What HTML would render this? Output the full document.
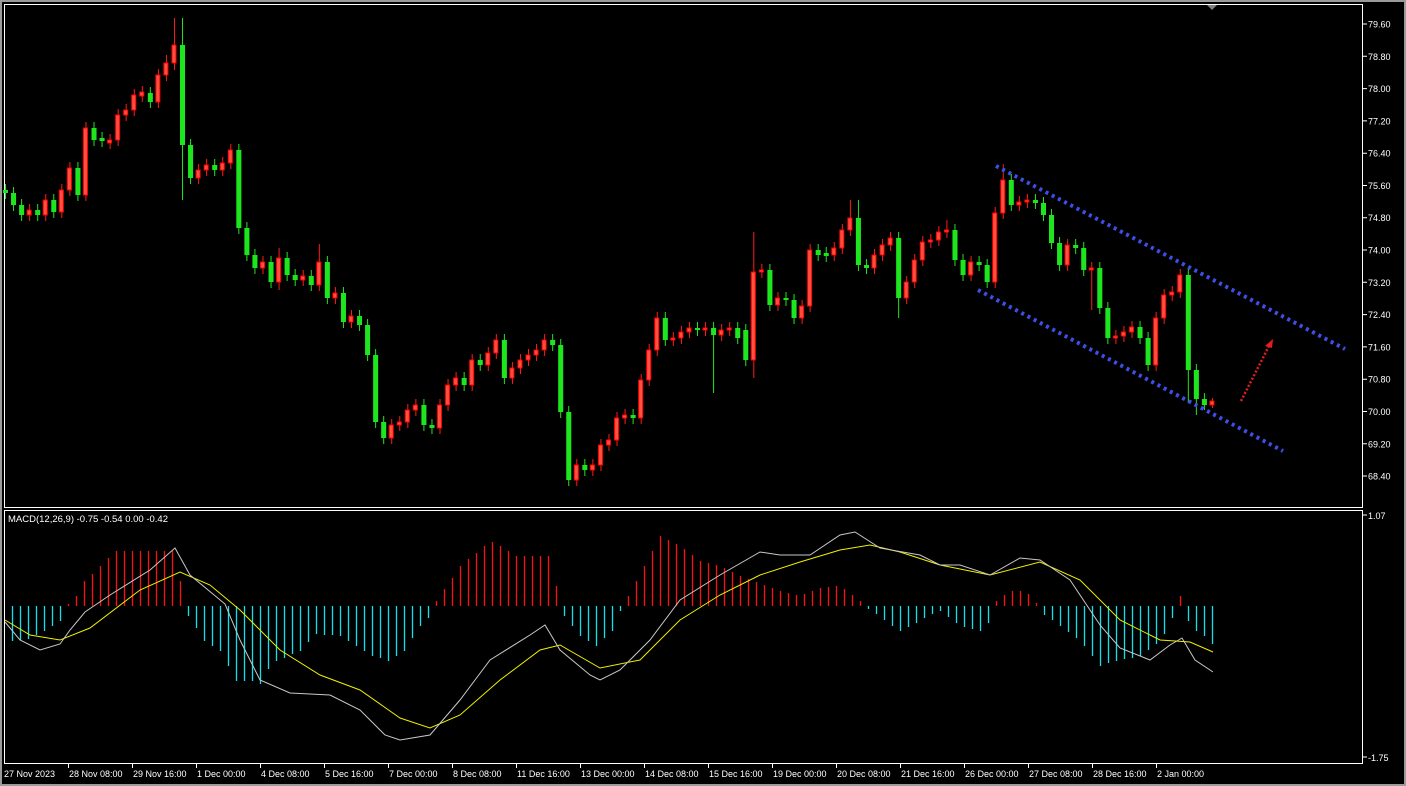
<!DOCTYPE html>
<html><head><meta charset="utf-8"><style>
html,body{margin:0;padding:0;background:#000;width:1406px;height:786px;overflow:hidden}
svg{display:block}
text{font-family:"Liberation Sans",sans-serif;font-size:9px;fill:#fff}
</style></head><body>
<svg width="1406" height="786" xmlns="http://www.w3.org/2000/svg">
<rect x="0" y="0" width="1406" height="786" fill="#000"/>
<rect x="0.5" y="0.5" width="1405" height="785" fill="none" stroke="#9a9a9a" stroke-width="3"/>
<rect x="4.5" y="4.5" width="1358" height="503" fill="none" stroke="#fff"/>
<rect x="4.5" y="510.5" width="1358" height="253" fill="none" stroke="#fff"/>
<polygon points="1207,5 1217,5 1212,10" fill="#808080"/>
<text x="8" y="522" style="font-size:9.5px">MACD(12,26,9) -0.75 -0.54 0.00 -0.42</text>

<g stroke="#fff">
<path d="M1363,24H1367M1363,56.3H1367M1363,88.6H1367M1363,120.9H1367M1363,153.2H1367M1363,185.5H1367M1363,217.7H1367M1363,250H1367M1363,282.3H1367M1363,314.6H1367M1363,346.9H1367M1363,379.2H1367M1363,411.5H1367M1363,443.8H1367M1363,476H1367M1363,515H1367M1363,757H1367"/>
<path d="M68.5,764V768M132.5,764V768M196.5,764V768M260.5,764V768M324.5,764V768M388.5,764V768M452.5,764V768M516.5,764V768M580.5,764V768M644.5,764V768M708.5,764V768M772.5,764V768M836.5,764V768M900.5,764V768M964.5,764V768M1028.5,764V768M1092.5,764V768M1156.5,764V768"/>
</g>
<text x="1368" y="27.5">79.60</text><text x="1368" y="59.8">78.80</text><text x="1368" y="92.1">78.00</text><text x="1368" y="124.4">77.20</text><text x="1368" y="156.7">76.40</text><text x="1368" y="189">75.60</text><text x="1368" y="221.2">74.80</text><text x="1368" y="253.5">74.00</text><text x="1368" y="285.8">73.20</text><text x="1368" y="318.1">72.40</text><text x="1368" y="350.4">71.60</text><text x="1368" y="382.7">70.80</text><text x="1368" y="415">70.00</text><text x="1368" y="447.3">69.20</text><text x="1368" y="479.5">68.40</text>
<text x="1368" y="519">1.07</text><text x="1368" y="761">-1.75</text>
<g style="font-size:9.5px">
<text x="4" y="777">27 Nov 2023</text><text x="69" y="777">28 Nov 08:00</text><text x="133" y="777">29 Nov 16:00</text><text x="197" y="777">1 Dec 00:00</text><text x="261" y="777">4 Dec 08:00</text><text x="325" y="777">5 Dec 16:00</text><text x="389" y="777">7 Dec 00:00</text><text x="453" y="777">8 Dec 08:00</text><text x="517" y="777">11 Dec 16:00</text><text x="581" y="777">13 Dec 00:00</text><text x="645" y="777">14 Dec 08:00</text><text x="709" y="777">15 Dec 16:00</text><text x="773" y="777">19 Dec 00:00</text><text x="837" y="777">20 Dec 08:00</text><text x="901" y="777">21 Dec 16:00</text><text x="965" y="777">26 Dec 00:00</text><text x="1029" y="777">27 Dec 08:00</text><text x="1093" y="777">28 Dec 16:00</text><text x="1157" y="777">2 Jan 00:00</text>
</g>

<g transform="translate(5 0) scale(1.0058 1) translate(-5 0)">
<path fill="none" stroke="#ff1a1a" d="M29.5,204V221M45.5,194V221M61.5,184V218M69.5,162V196M85.5,122V201M109.5,134V149M117.5,109V146M125.5,104V121M133.5,89V116M141.5,86V102M157.5,69V108M165.5,55V81M173.5,18V70M197.5,164V184M205.5,159V176M221.5,157V176M229.5,144V169M261.5,256V274M277.5,248V290M301.5,270V286M317.5,244V291M333.5,287V304M349.5,310V328M389.5,419V444M397.5,416V431M405.5,404V428M413.5,399V416M437.5,399V434M445.5,379V411M453.5,372V391M469.5,354V391M485.5,347V371M493.5,334V359M509.5,362V384M517.5,354V374M525.5,349V366M533.5,344V361M541.5,334V356M573.5,459V486M589.5,459V476M597.5,439V471M605.5,434V451M613.5,412V446M621.5,409V424M637.5,374V424M645.5,344V386M653.5,312V356M669.5,332V346M677.5,326V344M685.5,322V338M701.5,322V336M717.5,324V341M725.5,322V336M749.5,232V378M757.5,264V278M773.5,292V311M797.5,300V324M805.5,244V312M829.5,242V261M837.5,224V254M845.5,200V236M869.5,249V274M877.5,239V261M885.5,232V251M901.5,276V304M909.5,254V288M917.5,236V266M925.5,234V248M933.5,226V246M941.5,220V238M965.5,256V281M989.5,207V288M997.5,164V219M1013.5,196V211M1021.5,194V208M1061.5,239V271M1085.5,262V310M1109.5,330V344M1117.5,326V342M1125.5,321V338M1149.5,312V371M1157.5,289V324M1165.5,286V301M1173.5,269V298M1205.5,398V408"/>
<path fill="#ff5040" stroke="#ff0000" d="M27,210h4v5h-4zM43,200h4v15h-4zM59,190h4v22h-4zM67,168h4v22h-4zM83,128h4v67h-4zM107,140h4v3h-4zM115,115h4v25h-4zM123,110h4v5h-4zM131,95h4v15h-4zM139,92h4v4h-4zM155,75h4v27h-4zM163,63h4v12h-4zM171,45h4v18h-4zM195,170h4v8h-4zM203,165h4v5h-4zM219,163h4v7h-4zM227,150h4v13h-4zM259,262h4v6h-4zM275,258h4v24h-4zM299,276h4v4h-4zM315,262h4v23h-4zM331,293h4v5h-4zM347,316h4v6h-4zM387,425h4v13h-4zM395,422h4v3h-4zM403,410h4v12h-4zM411,405h4v5h-4zM435,405h4v23h-4zM443,385h4v20h-4zM451,378h4v7h-4zM467,360h4v25h-4zM483,353h4v12h-4zM491,340h4v13h-4zM507,368h4v10h-4zM515,360h4v8h-4zM523,355h4v5h-4zM531,350h4v5h-4zM539,340h4v10h-4zM571,465h4v15h-4zM587,465h4v5h-4zM595,445h4v20h-4zM603,440h4v5h-4zM611,418h4v22h-4zM619,415h4v3h-4zM635,380h4v38h-4zM643,350h4v30h-4zM651,318h4v32h-4zM667,338h4v2h-4zM675,332h4v6h-4zM683,328h4v4h-4zM699,328h4v2h-4zM715,330h4v5h-4zM723,328h4v2h-4zM747,272h4v88h-4zM755,270h4v2h-4zM771,298h4v7h-4zM795,306h4v12h-4zM803,250h4v56h-4zM827,248h4v7h-4zM835,230h4v18h-4zM843,218h4v12h-4zM867,255h4v13h-4zM875,245h4v10h-4zM883,238h4v7h-4zM899,282h4v16h-4zM907,260h4v22h-4zM915,242h4v18h-4zM923,240h4v2h-4zM931,232h4v8h-4zM939,230h4v2h-4zM963,262h4v13h-4zM987,213h4v69h-4zM995,180h4v33h-4zM1011,202h4v3h-4zM1019,200h4v2h-4zM1059,245h4v20h-4zM1083,268h4v2h-4zM1107,336h4v2h-4zM1115,332h4v4h-4zM1123,327h4v5h-4zM1147,318h4v47h-4zM1155,295h4v23h-4zM1163,292h4v3h-4zM1171,275h4v17h-4zM1203,401h4v4h-4z"/>
<path fill="none" stroke="#1ee61e" d="M5.5,184V199M13.5,187V211M21.5,199V221M37.5,204V221M53.5,194V218M77.5,162V201M93.5,122V146M101.5,132V147M149.5,87V108M181.5,18V200M189.5,139V184M213.5,159V176M237.5,144V234M245.5,222V261M253.5,249V274M269.5,256V288M285.5,252V281M293.5,269V286M309.5,270V291M325.5,256V304M341.5,287V328M357.5,310V331M365.5,319V361M373.5,349V428M381.5,416V444M421.5,399V431M429.5,419V434M461.5,372V391M477.5,354V371M501.5,334V384M549.5,334V351M557.5,339V418M565.5,406V486M581.5,459V476M629.5,409V424M661.5,312V346M693.5,322V336M709.5,322V393M733.5,322V344M741.5,324V366M765.5,264V311M781.5,292V306M789.5,294V324M813.5,244V261M821.5,247V262M853.5,200V271M861.5,259V274M893.5,232V318M949.5,224V266M957.5,254V281M973.5,256V271M981.5,259V288M1005.5,174V211M1029.5,194V209M1037.5,197V221M1045.5,209V249M1053.5,237V271M1069.5,239V254M1077.5,242V276M1093.5,262V314M1101.5,302V344M1133.5,321V344M1141.5,332V371M1181.5,269V403M1189.5,364V415M1197.5,393V410"/>
<path fill="#1ee61e" d="M3,190h5v3h-5zM11,193h5v12h-5zM19,205h5v10h-5zM35,210h5v5h-5zM51,200h5v12h-5zM75,168h5v27h-5zM91,128h5v12h-5zM99,138h5v3h-5zM147,93h5v9h-5zM179,45h5v100h-5zM187,145h5v33h-5zM211,165h5v5h-5zM235,150h5v78h-5zM243,228h5v27h-5zM251,255h5v13h-5zM267,262h5v20h-5zM283,258h5v17h-5zM291,275h5v5h-5zM307,276h5v9h-5zM323,262h5v36h-5zM339,293h5v29h-5zM355,316h5v9h-5zM363,325h5v30h-5zM371,355h5v67h-5zM379,422h5v16h-5zM419,405h5v20h-5zM427,425h5v3h-5zM459,378h5v7h-5zM475,360h5v5h-5zM499,340h5v38h-5zM547,340h5v5h-5zM555,345h5v67h-5zM563,412h5v68h-5zM579,465h5v5h-5zM627,415h5v3h-5zM659,318h5v22h-5zM691,328h5v2h-5zM707,328h5v7h-5zM731,328h5v10h-5zM739,330h5v30h-5zM763,270h5v35h-5zM779,298h5v2h-5zM787,300h5v18h-5zM811,250h5v5h-5zM819,253h5v3h-5zM851,218h5v47h-5zM859,265h5v3h-5zM891,238h5v60h-5zM947,230h5v30h-5zM955,260h5v15h-5zM971,262h5v3h-5zM979,265h5v17h-5zM1003,180h5v25h-5zM1027,200h5v3h-5zM1035,203h5v12h-5zM1043,215h5v28h-5zM1051,243h5v22h-5zM1067,245h5v3h-5zM1075,248h5v22h-5zM1091,268h5v40h-5zM1099,308h5v30h-5zM1131,327h5v11h-5zM1139,338h5v27h-5zM1179,275h5v95h-5zM1187,370h5v29h-5zM1195,399h5v6h-5z"/>
</g>

<line x1="996" y1="166" x2="1345" y2="349" stroke="#3c4fe8" stroke-width="4" stroke-dasharray="3,4"/>
<line x1="978" y1="290" x2="1283" y2="451" stroke="#3c4fe8" stroke-width="4" stroke-dasharray="3,4"/>
<line x1="1241" y1="401" x2="1269" y2="346" stroke="#e0201e" stroke-width="2.5" stroke-dasharray="2,2"/>
<polygon points="1273,339 1265,346 1272,348" fill="#e0201e"/>

<path fill="none" stroke="#10e0f0" stroke-width="1.3" d="M12.5,606v35M20.5,606v34M28.5,606v33M36.5,606v29M44.5,606v25M52.5,606v20M60.5,606v15M188.5,606v10M196.5,606v22M204.5,606v35M212.5,606v40M220.5,606v45M228.5,606v60M236.5,606v75M244.5,606v75M252.5,606v75M260.5,606v78M268.5,606v63M276.5,606v55M284.5,606v52M292.5,606v48M300.5,606v45M308.5,606v36M316.5,606v28M324.5,606v29M332.5,606v29M340.5,606v30M348.5,606v35M356.5,606v40M364.5,606v45M372.5,606v50M380.5,606v52M388.5,606v55M396.5,606v50M404.5,606v45M412.5,606v32M420.5,606v20M428.5,606v12M564.5,606v10M572.5,606v20M580.5,606v30M588.5,606v35M596.5,606v40M604.5,606v32M612.5,606v25M620.5,606v5M868.5,606v3M876.5,606v8M884.5,606v14M892.5,606v20M900.5,606v25M908.5,606v21M916.5,606v17M924.5,606v12M932.5,606v8M940.5,606v5M948.5,606v11M956.5,606v17M964.5,606v21M972.5,606v23M980.5,606v25M988.5,606v17M1044.5,606v9M1052.5,606v14M1060.5,606v20M1068.5,606v26M1076.5,606v32M1084.5,606v40M1092.5,606v50M1100.5,606v60M1108.5,606v57M1116.5,606v55M1124.5,606v53M1132.5,606v52M1140.5,606v50M1148.5,606v44M1156.5,606v38M1164.5,606v28M1172.5,606v12M1188.5,606v15M1196.5,606v25M1204.5,606v30M1212.5,606v38"/>
<path fill="none" stroke="#ff1010" stroke-width="1.3" d="M68.5,606v-2M76.5,606v-10M84.5,606v-25M92.5,606v-32M100.5,606v-40M108.5,606v-48M116.5,606v-55M124.5,606v-55M132.5,606v-55M140.5,606v-55M148.5,606v-55M156.5,606v-55M164.5,606v-55M172.5,606v-55M180.5,606v-25M436.5,606v-5M444.5,606v-17M452.5,606v-28M460.5,606v-40M468.5,606v-47M476.5,606v-53M484.5,606v-60M492.5,606v-64M500.5,606v-60M508.5,606v-55M516.5,606v-50M524.5,606v-50M532.5,606v-50M540.5,606v-50M548.5,606v-50M556.5,606v-20M628.5,606v-10M636.5,606v-25M644.5,606v-40M652.5,606v-55M660.5,606v-70M668.5,606v-66M676.5,606v-62M684.5,606v-57M692.5,606v-51M700.5,606v-45M708.5,606v-43M716.5,606v-41M724.5,606v-38M732.5,606v-34M740.5,606v-30M748.5,606v-27M756.5,606v-24M764.5,606v-21M772.5,606v-18M780.5,606v-15M788.5,606v-13M796.5,606v-11M804.5,606v-12M812.5,606v-15M820.5,606v-18M828.5,606v-19M836.5,606v-20M844.5,606v-17M852.5,606v-11M860.5,606v-5M996.5,606v-5M1004.5,606v-11M1012.5,606v-15M1020.5,606v-15M1028.5,606v-12M1036.5,606v-3M1180.5,606v-10"/>

<polyline fill="none" stroke="#f0f000" stroke-width="1" points="5,620 30,635 60,640 90,628 140,590 180,572 210,585 240,610 280,650 320,675 360,690 400,718 430,728 460,715 500,680 540,650 560,645 600,668 640,660 680,620 720,595 760,575 800,562 840,550 870,545 900,552 940,565 990,575 1040,562 1080,580 1120,620 1160,640 1190,642 1213,652"/>
<polyline fill="none" stroke="#c8c8c8" stroke-width="1" points="5,622 20,640 40,650 60,644 70,630 85,612 110,595 150,570 175,548 190,575 225,604 240,640 260,680 290,693 330,695 360,710 385,735 400,740 430,735 460,700 490,660 530,635 545,625 560,650 590,675 600,680 620,670 650,640 680,600 720,575 760,552 780,555 810,555 840,535 855,532 880,548 920,555 940,565 960,565 990,575 1020,558 1040,560 1070,580 1100,625 1120,648 1150,660 1170,645 1182,638 1195,660 1213,672"/>
</svg>
</body></html>
